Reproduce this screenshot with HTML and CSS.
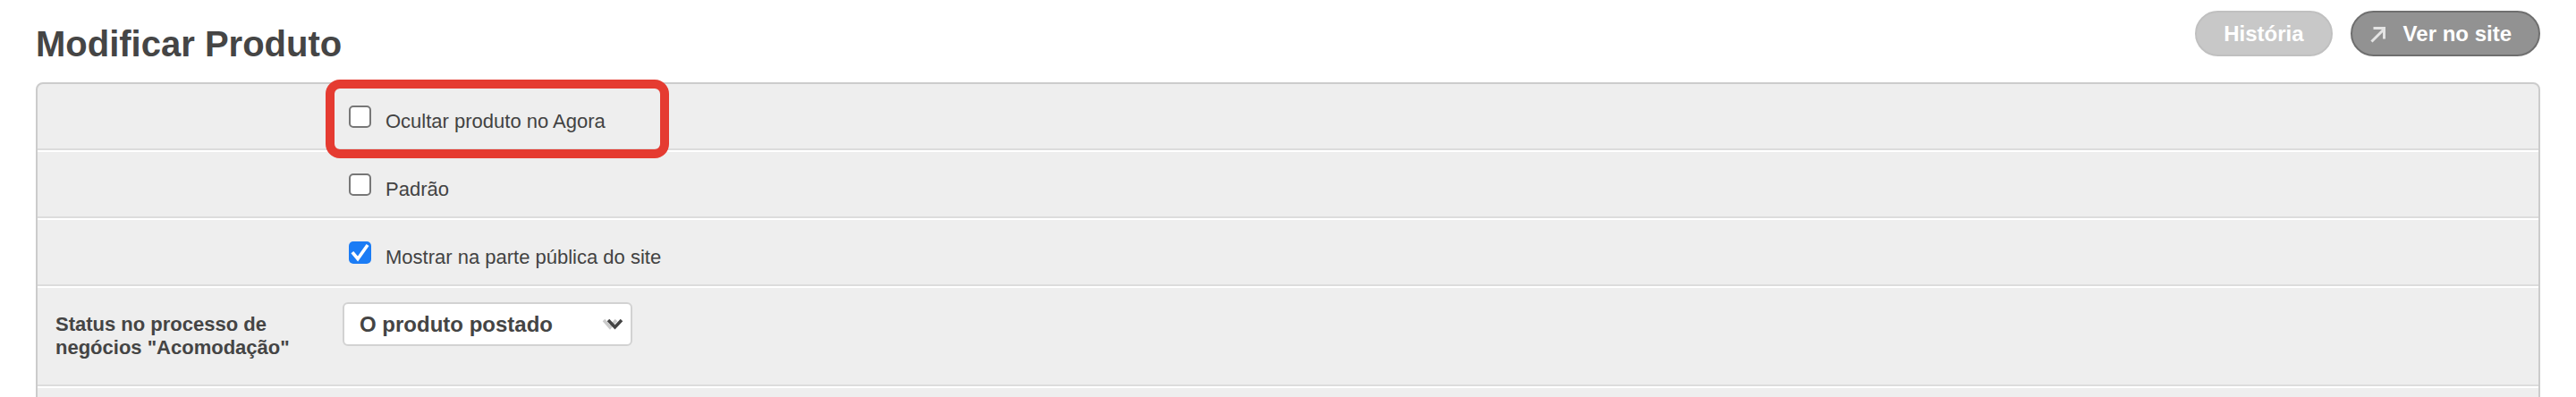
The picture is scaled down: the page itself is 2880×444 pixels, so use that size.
FILE: index.html
```html
<!DOCTYPE html>
<html lang="pt">
<head>
<meta charset="utf-8">
<title>Modificar Produto</title>
<link rel="stylesheet" href="styles.css">
</head>
<body>
<header class="page-header">
  <h1 class="title">Modificar Produto</h1>
  <div class="actions">
    <a class="btn btn-light">História</a>
    <a class="btn btn-dark">
      <svg class="btn-icon" width="18" height="20" viewBox="0 0 18 20" aria-hidden="true">
        <g fill="none" stroke="#e4e4e4" stroke-width="3" stroke-linecap="square">
          <path d="M2.5 17.5 L15 5"/>
          <path d="M5 3.5 H15.5 V14"/>
        </g>
      </svg>
      <span>Ver no site</span>
    </a>
  </div>
</header>

<div class="panel">
  <div class="row row-check">
    <div class="row-label"></div>
    <div class="row-field">
      <label class="check">
        <span class="box"></span>
        <span class="check-text">Ocultar produto no Agora</span>
      </label>
      <span class="highlight"></span>
    </div>
  </div>
  <div class="row row-check">
    <div class="row-label"></div>
    <div class="row-field">
      <label class="check">
        <span class="box"></span>
        <span class="check-text">Padrão</span>
      </label>
    </div>
  </div>
  <div class="row row-check">
    <div class="row-label"></div>
    <div class="row-field">
      <label class="check">
        <span class="box box-checked">
          <svg class="tick" width="25" height="25" viewBox="0 0 25 25" aria-hidden="true">
            <path d="M5 13.5 L10 19.5 L20 5.5" fill="none" stroke="#fff" stroke-width="3.6" stroke-linecap="square" stroke-linejoin="miter"/>
          </svg>
        </span>
        <span class="check-text">Mostrar na parte pública do site</span>
      </label>
    </div>
  </div>
  <div class="row row-select">
    <div class="row-label label-text">Status no processo de negócios "Acomodação"</div>
    <div class="row-field field-select">
      <div class="select">
        <span class="select-value">O produto postado</span>
        <svg class="chevron" width="26" height="16" viewBox="0 0 26 16" aria-hidden="true">
          <polyline points="2,3 9,11 16,3" fill="none" stroke="#b5b5b5" stroke-width="3.5" opacity="0.7"/>
          <polyline points="7,3 14.5,11 22,3" fill="none" stroke="#444" stroke-width="3.5"/>
        </svg>
      </div>
    </div>
  </div>
  <div class="row row-empty"></div>
</div>
</body>
</html>
```

FILE: styles.css
```css
html, body {
  margin: 0;
  padding: 0;
  background: #ffffff;
}

body {
  padding: 0 40px;
  font-family: "Liberation Sans", Arial, Helvetica, sans-serif;
  color: #444444;
}

.page-header {
  display: flex;
  justify-content: space-between;
  align-items: flex-start;
  padding-top: 12px;
  margin-bottom: 20px;
}

.title {
  margin: 14px 0 0 0;
  font-size: 40px;
  line-height: 46px;
  font-weight: bold;
  color: #454545;
}

.actions {
  display: flex;
  gap: 20px;
}

.btn {
  box-sizing: border-box;
  height: 51px;
  display: inline-flex;
  align-items: center;
  border-radius: 26px;
  font-size: 24px;
  font-weight: bold;
  color: #ffffff;
  text-decoration: none;
  border: 2px solid transparent;
}

.btn-light {
  background: #c8c8c8;
  border-color: #c0c0c0;
  padding: 0 30px;
}

.btn-dark {
  background: #929292;
  border-color: #6f6f6f;
  padding: 0 30px 0 20px;
  gap: 19px;
}

.btn-icon {
  display: block;
  filter: blur(0.4px);
}

.panel {
  border: 2px solid #cccccc;
  border-radius: 8px;
  background: #eeeeee;
}

.row {
  display: flex;
  border-top: 2px solid #ffffff;
  border-bottom: 2px solid #dcdcdc;
}

.row:first-child {
  border-top: 0;
}

.row-label {
  box-sizing: border-box;
  width: 341px;
  flex: none;
  padding: 0 20px;
}

.row-field {
  flex: 1;
  position: relative;
}

.row-check {
  height: 72px;
}

.row-check .row-field {
  padding-top: 24px;
  padding-left: 7px;
}

.check {
  display: inline-flex;
  align-items: baseline;
  gap: 16px;
  font-size: 22px;
  color: #424242;
}

.box {
  display: block;
  box-sizing: border-box;
  width: 25px;
  height: 25px;
  border: 2px solid #777777;
  border-radius: 5px;
  background: #ffffff;
}

.box-checked {
  border: 0;
  background: #1b7cf5;
}

.tick {
  display: block;
}

.highlight {
  position: absolute;
  left: -19px;
  top: -5px;
  width: 384px;
  height: 88px;
  box-sizing: border-box;
  border: 10px solid #e53b31;
  border-radius: 16px;
  pointer-events: none;
}

.row-select {
  min-height: 108px;
}

.label-text {
  padding-top: 28px;
  padding-bottom: 28px;
  font-size: 22px;
  line-height: 26px;
  font-weight: bold;
  color: #444444;
}

.field-select {
  padding-top: 16px;
}

.select {
  box-sizing: border-box;
  width: 324px;
  height: 49px;
  display: flex;
  align-items: center;
  justify-content: space-between;
  padding: 0 6px 0 17px;
  background: #ffffff;
  border: 2px solid #d2d2d2;
  border-radius: 6px;
}

.select-value {
  font-size: 24px;
  font-weight: bold;
  color: #444444;
}

.chevron {
  display: block;
}

.row-empty {
  height: 60px;
}
```
